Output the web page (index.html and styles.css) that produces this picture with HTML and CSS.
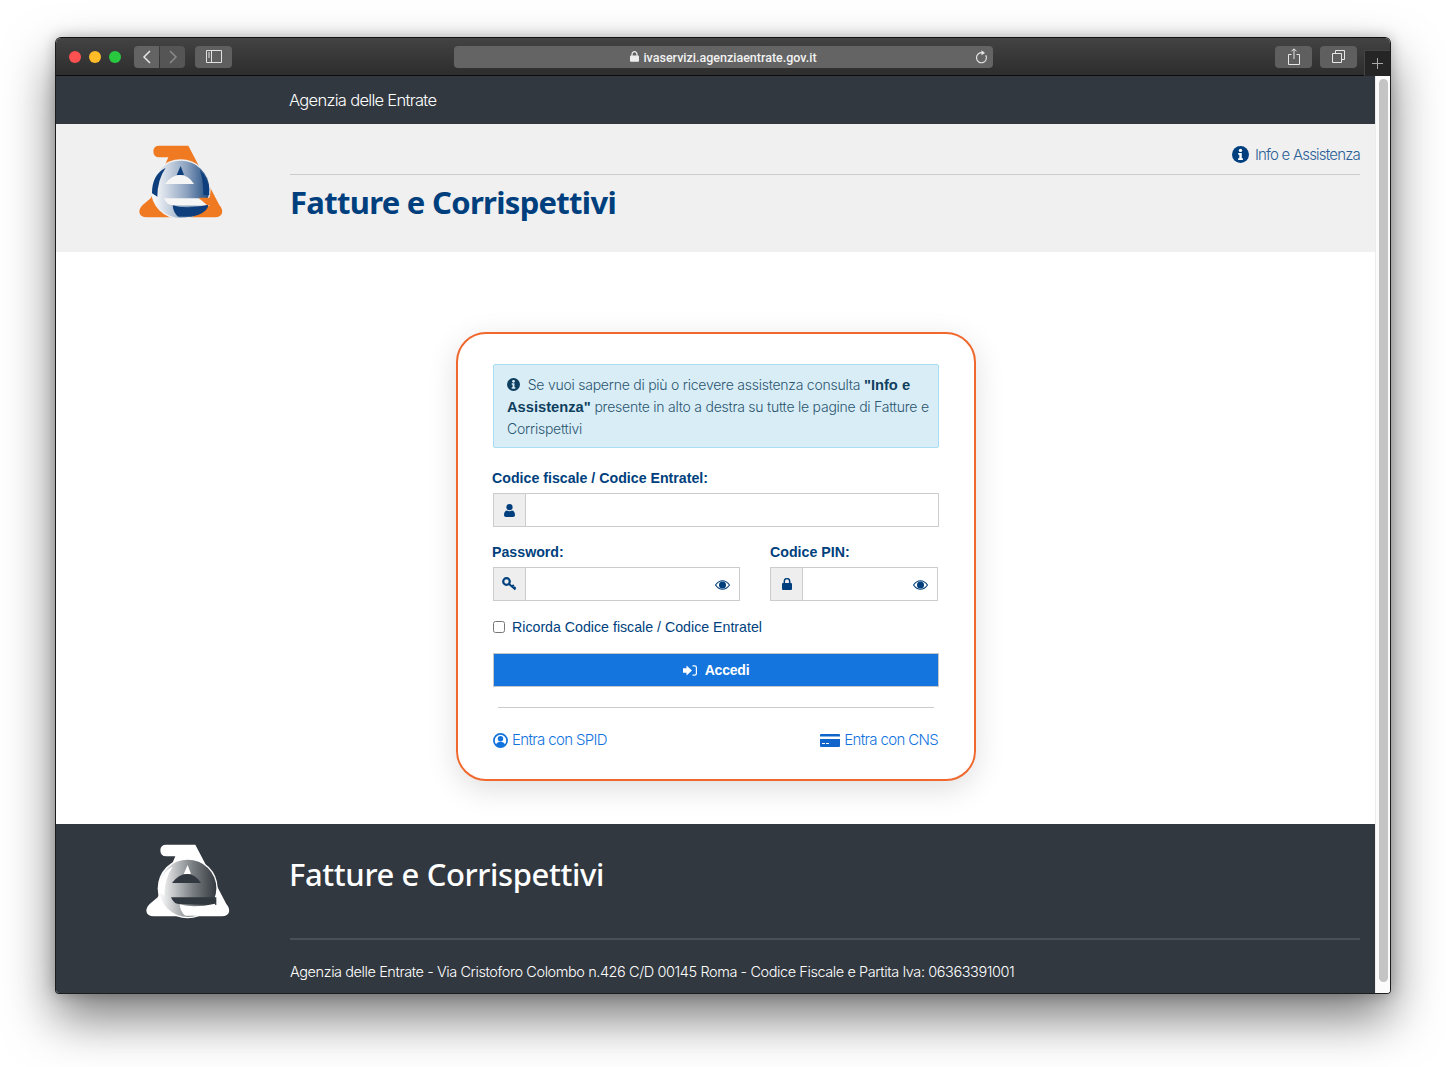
FILE: index.html
```html
<!DOCTYPE html>
<html lang="it">
<head>
<meta charset="utf-8">
<title>Fatture e Corrispettivi</title>
<link rel="stylesheet" href="styles.css">
</head>
<body>
<div class="window">
  <div class="toolbar">
    <div class="lights"><span class="light red"></span><span class="light yellow"></span><span class="light green"></span></div>
    <div class="nav">
      <span class="tbtn back"><svg width="12" height="16" viewBox="0 0 12 16"><path d="M9 2 3 8l6 6" fill="none" stroke="#e6e6e6" stroke-width="1.5"/></svg></span>
      <span class="tbtn fwd"><svg width="12" height="16" viewBox="0 0 12 16"><path d="m3 2 6 6-6 6" fill="none" stroke="#8a8a8a" stroke-width="1.5"/></svg></span>
    </div>
    <span class="tbtn wide side"><svg width="16" height="13" viewBox="0 0 16 13"><path d="M.5.5h15v12H.5zM5.500.5v12" fill="none" stroke="#e2e2e2"/><path d="M2 3h2M2 5h2M2 7h2" stroke="#e2e2e2"/></svg></span>
    <div class="url">
      <svg class="lock-mini" width="9" height="11" viewBox="0 0 9 11"><path d="M2 5V3.200a2.500 2.500 0 0 1 5 0V5" fill="none" stroke="#eee" stroke-width="1.200"/><rect y="4.600" width="9" height="6.200" rx="1" fill="#eee"/></svg>
      <span class="url-text">ivaservizi.agenziaentrate.gov.it</span>
      <svg class="reload" width="13" height="14" viewBox="0 0 13 14"><path d="M10.800 5.200a5 5 0 1 1-3-2.300" fill="none" stroke="#e6e6e6" stroke-width="1.200"/><path d="M6.500.3 10 3 6.500 5.200z" fill="#e6e6e6"/></svg>
    </div>
    <span class="tbtn wide share"><svg width="12" height="17" viewBox="0 0 12 17"><path d="M3.500 6.500H.5v10h11v-10h-3M6 11V1M3.500 3.300 6 .8l2.500 2.500" fill="none" stroke="#e6e6e6"/></svg></span>
    <span class="tbtn wide tabs"><svg width="13" height="13" viewBox="0 0 13 13"><path d="M3.500 3V.5h9v9H10M.5 3.500h9v9h-9z" fill="none" stroke="#e6e6e6"/></svg></span>
    <span class="newtab"><svg width="11" height="11" viewBox="0 0 11 11"><path d="M5.500 0v11M0 5.500h11" stroke="#aaa"/></svg></span>
  </div>

  <div class="viewport">
    <div class="page">
      <div class="topbar">Agenzia delle Entrate</div>

      <header class="header">
        <div class="logo-col">
          <svg class="logo" width="130" height="100" viewBox="0 0 390 300">
            <defs>
              <linearGradient id="g1" x1="0" x2="1" y1="0" y2="0"><stop offset="0" stop-color="#fff"/><stop offset=".6" stop-color="#8ea3c0"/><stop offset="1" stop-color="#1d4a80"/></linearGradient>
            </defs>
            <path d="M118 47H205L298 225C312 240 310 262 285 262H80C55 262 52 240 68 225L92 205 145 82H118Q100 82 100 64 100 47 118 47Z" fill="#f07a22"/>
            <circle cx="182" cy="178" r="90" fill="#f0f0f0"/>
            <circle cx="182" cy="178" r="86" fill="url(#g1)"/>
            <path d="M137 113Q95 135 96 190L112 200Q112 150 137 113Z" fill="#0e3f7c"/>
            <path d="M182 108 192 135H170Z" fill="#0e3f7c"/>
            <path d="M240 120Q270 150 268 195L250 195Q250 150 240 120Z" fill="#0e3f7c"/>
            <path d="M135 162Q155 135 180 135 205 135 222 162Z" fill="#f5f5f5"/>
            <path d="M132 205H268V228L160 226Q140 226 132 205Z" fill="#f5f5f5"/>
            <path d="M158 226Q200 238 265 224 262 250 215 260H175Q160 250 158 226Z" fill="#0e3f7c"/>
            <path d="M235 203H275L290 226 262 226Z" fill="#f07a22"/>
          </svg>
        </div>
        <div class="head-main">
          <a class="info-link" href="#"><svg class="i-info" width="17" height="17" viewBox="0 0 17 17"><circle cx="8.500" cy="8.500" r="8.500" fill="#003f7d"/><circle cx="8.500" cy="4.400" r="1.700" fill="#fff"/><path d="M6.200 7h3.600v5.200h1.100v1.800H6.100v-1.800h1.200V8.800H6.200z" fill="#fff"/></svg>Info e Assistenza</a>
          <h1 class="app-title">Fatture e Corrispettivi</h1>
        </div>
      </header>

      <main class="main">
        <form class="card">
          <div class="alert">
            <svg class="i-alert" width="13" height="13" viewBox="0 0 17 17"><circle cx="8.500" cy="8.500" r="8.500" fill="#0f3f5e"/><circle cx="8.500" cy="4.400" r="1.800" fill="#d9edf7"/><path d="M6.200 7h3.600v5.200h1.100v1.800H6.100v-1.800h1.200V8.800H6.200z" fill="#d9edf7"/></svg>
            Se vuoi saperne di più o ricevere assistenza consulta <strong>"Info e</strong> <strong>Assistenza"</strong> presente in alto a destra su tutte le pagine di Fatture e <span>Corrispettivi</span>
          </div>

          <label class="label">Codice fiscale / Codice Entratel:</label>
          <div class="field">
            <span class="addon"><svg width="11" height="13" viewBox="0 0 11 13"><circle cx="5.500" cy="3.200" r="3.100" fill="#003f7d"/><path d="M0 11c0-3 1.500-4.600 3-4.600.7.500 1.500.8 2.500.8s1.800-.3 2.500-.8c1.500 0 3 1.600 3 4.600 0 1.200-.8 2-2 2H2c-1.200 0-2-.8-2-2z" fill="#003f7d"/></svg></span>
            <input class="input" type="text">
          </div>

          <div class="pair">
            <div class="col-pass">
              <label class="label">Password:</label>
              <div class="field">
                <span class="addon"><svg width="15" height="14" viewBox="0 0 15 14"><circle cx="4.500" cy="4.500" r="3.300" fill="none" stroke="#003f7d" stroke-width="2.200"/><path d="m7 7 6.500 5.500M10 9.500l1.800-1.600M12 11.300l1.500-1.300" stroke="#003f7d" stroke-width="2" fill="none"/></svg></span>
                <input class="input" type="password">
                <svg class="eye" width="15" height="10" viewBox="0 0 15 10"><path d="M.5 5Q3.500.7 7.500.7T14.500 5Q11.500 9.300 7.500 9.300T.5 5Z" fill="none" stroke="#003f7d" stroke-width="1.100"/><circle cx="7.500" cy="5" r="3.500" fill="#003f7d"/></svg>
              </div>
            </div>
            <div class="col-pin">
              <label class="label label-pin">Codice PIN:</label>
              <div class="field">
                <span class="addon"><svg width="10" height="12" viewBox="0 0 10 12"><path d="M2.300 5.500V3.300a2.700 2.700 0 0 1 5.400 0v2.200" fill="none" stroke="#003f7d" stroke-width="1.500"/><rect y="5" width="10" height="7" rx="1" fill="#003f7d"/></svg></span>
                <input class="input" type="password">
                <svg class="eye" width="15" height="10" viewBox="0 0 15 10"><path d="M.5 5Q3.500.7 7.500.7T14.500 5Q11.500 9.300 7.500 9.300T.5 5Z" fill="none" stroke="#003f7d" stroke-width="1.100"/><circle cx="7.500" cy="5" r="3.500" fill="#003f7d"/></svg>
              </div>
            </div>
          </div>

          <label class="remember"><input class="check" type="checkbox">Ricorda Codice fiscale / Codice Entratel</label>

          <button class="submit" type="button"><svg width="14" height="11" viewBox="0 0 14 11"><path d="M0 3.300h3.500V.5L9 5.500 3.500 10.500V7.700H0z" fill="#fff"/><path d="M9.500.9h2.200q1.700 0 1.700 1.700v5.800q0 1.700-1.700 1.700H9.500" fill="none" stroke="#fff" stroke-width="1.200"/></svg>Accedi</button>

          <div class="rule"></div>

          <div class="alt">
            <a class="alt-link" href="#"><svg width="15" height="15" viewBox="0 0 15 15"><circle cx="7.500" cy="7.500" r="6.600" fill="#fff" stroke="#1273de" stroke-width="1.700"/><circle cx="7.500" cy="5.800" r="2.700" fill="#1273de"/><path d="M2.800 12c.8-2.200 2.500-3.200 4.700-3.200s3.900 1 4.700 3.200q-2 2-4.700 2t-4.700-2z" fill="#1273de"/></svg>Entra con SPID</a>
            <a class="alt-link" href="#"><svg width="20" height="13" viewBox="0 0 20 13"><path d="M1 0h18q1 0 1 1v1.500H0V1q0-1 1-1zM0 5h20v7q0 1-1 1H1q-1 0-1-1z" fill="#0f65c9"/><path d="M2 9.500h3M6 9.500h3" stroke="#fff" stroke-width="1"/></svg>Entra con CNS</a>
          </div>
        </form>
      </main>

      <footer class="footer">
        <div class="foot-logo">
          <svg class="logo" width="130" height="100" viewBox="0 0 390 300">
            <defs>
              <linearGradient id="g2" x1="0" x2="1" y1="0" y2="0"><stop offset="0" stop-color="#fff"/><stop offset=".6" stop-color="#777c80"/><stop offset="1" stop-color="#33393f"/></linearGradient>
            </defs>
            <path d="M118 47H205L298 225C312 240 310 262 285 262H80C55 262 52 240 68 225L92 205 145 82H118Q100 82 100 64 100 47 118 47Z" fill="#fff"/>
            <circle cx="182" cy="178" r="90" fill="#fff"/>
            <circle cx="182" cy="178" r="86" fill="url(#g2)"/>
            <path d="M137 113Q95 135 96 190L112 200Q112 150 137 113Z" fill="#fff"/>
            <path d="M182 108 192 135H170Z" fill="#fff"/>
            <path d="M135 162Q155 135 180 135 205 135 222 162Z" fill="#32383f"/>
            <path d="M132 205H268V228L160 226Q140 226 132 205Z" fill="#32383f"/>
            <path d="M158 226Q200 238 265 224 262 250 215 260H175Q160 250 158 226Z" fill="#fff"/>
          </svg>
        </div>
        <div class="foot-main">
          <div class="foot-title">Fatture e Corrispettivi</div>
          <div class="address">Agenzia delle Entrate - Via Cristoforo Colombo n.426 C/D 00145 Roma - Codice Fiscale e Partita Iva: 06363391001</div>
        </div>
      </footer>
    </div>
    <div class="scrollbar"><span class="thumb"></span></div>
  </div>
</div>
</body>
</html>
```

FILE: styles.css
```css
* { box-sizing: border-box; }
html, body { margin: 0; height: 1067px; overflow: hidden; background: #fff; }
body { padding: 37px 55px 0; font-family: "Inter", "Liberation Sans", sans-serif; }
a { text-decoration: none; }

.window {
  width: 1336px; height: 957px; border-radius: 6px 6px 4px 4px;
  display: flex; flex-direction: column; border: 1px solid #1c1c1c; border-top-color: #111;
  box-shadow: 0 24px 50px rgba(0,0,0,.52), 0 0 14px rgba(0,0,0,.25);
}

.toolbar {
  height: 38px; flex: none; display: flex; align-items: center; padding: 0 0 0 13px; position: relative;
  background: linear-gradient(#434343, #2d2d2d); border-bottom: 1px solid #0c0c0c;
  border-radius: 5px 5px 0 0;
}
.lights { display: flex; gap: 8px; }
.light { width: 12px; height: 12px; border-radius: 50%; }
.red { background: #fc5150; }
.yellow { background: #fdbc28; }
.green { background: #29c93f; }

.nav { display: flex; gap: 1px; margin-left: 13px; }
.tbtn { height: 22px; background: #5f5f5f; display: flex; align-items: center; justify-content: center; border-radius: 4px; }
.back { width: 25px; border-radius: 4px 0 0 4px; background: #636363; }
.fwd { width: 25px; border-radius: 0 4px 4px 0; background: #555; }
.wide { width: 37px; }
.side { margin-left: 10px; }
.url {
  width: 539px; height: 22px; margin-left: 222px; background: #646464; border-radius: 4px;
  display: flex; align-items: center; justify-content: center; position: relative; color: #f2f2f2;
  font: 500 12.500px "Roboto", sans-serif; gap: 4px;
}
.url-text { padding-top: 2px; }
.lock-mini { margin-top: -1px; }
.reload { position: absolute; right: 5px; top: 4px; }
.share { margin-left: 282px; }
.tabs { margin-left: 8px; }
.newtab {
  width: 26px; height: 26px; position: absolute; right: 0; bottom: -1px; background: #252525;
  border: 1px solid #444; border-bottom: 0; border-right: 0; display: flex; align-items: center; justify-content: center;
}

.viewport { flex: 1; display: flex; min-height: 0; border-radius: 0 0 3px 3px; overflow: hidden; }
.page { width: 1319px; flex: none; display: flex; flex-direction: column; }
.scrollbar { flex: 1; background: #fbfbfb; border-left: 1px solid #ececec; padding: 3px 3px; }
.thumb { display: block; width: 9px; height: 903px; border-radius: 5px; background: #c4c4c4; }

.topbar {
  height: 48px; flex: none; background: #32383f; color: #fff; padding-left: 233px;
  display: flex; align-items: center; font-size: 16.500px; font-weight: 300; letter-spacing: -.7px;
}

.header { height: 128px; flex: none; background: #f0f0f0; display: flex; }
.logo-col { width: 234px; flex: none; padding: 6px 0 0 64px; }
.logo { display: block; }
.head-main { flex: 1; margin-right: 15px; }
.info-link {
  height: 51px; border-bottom: 1px solid #ccc; display: flex; align-items: center; justify-content: flex-end;
  color: #2a5f97; font-size: 15px; font-weight: 300; letter-spacing: -.8px; gap: 6px; padding-top: 11px;
}
.app-title {
  margin: 7px 0 0; font: 700 31px/40px "Noto Sans", sans-serif; color: #003f7d; letter-spacing: -.7px;
}

.main { height: 572px; flex: none; background: #fff; padding: 80px 0 0 400px; }
.card {
  width: 520px; height: 449px; border: 2px solid #f0682d; border-radius: 30px; background: #fff;
  padding: 30px 35px 0; box-shadow: 0 8px 30px rgba(0,0,0,.13);
  display: flex; flex-direction: column; align-items: flex-start;
}
.alert {
  width: 446px; height: 84px; background: #d9edf7; border: 1px solid #a8def5; border-radius: 2px;
  padding: 9px 5px 0 13px; color: #2a566f; font-size: 14px; line-height: 22px; font-weight: 300; letter-spacing: -.24px;
}
.alert strong { font-family: "Liberation Sans", sans-serif; font-weight: 700; color: #0f3f5e; letter-spacing: 0; font-size: 14.700px; }
.i-alert { vertical-align: -1px; margin-right: 4px; }

.label { display: block; margin-left: -1px; color: #003f7d; font: 700 14.200px/18px "Liberation Sans", sans-serif; }
.label-pin { margin-left: 0; }
.alert + .label { margin-top: 21px; }
.field {
  height: 34px; width: 446px; margin-top: 6px; border: 1px solid #ccc; display: flex; align-items: center; background: #fff;
}
.addon { width: 32px; height: 32px; flex: none; background: #eee; border-right: 1px solid #ccc; display: flex; align-items: center; justify-content: center; }
.input { flex: 1; min-width: 0; height: 32px; border: 0; outline: 0; padding: 0 8px; background: transparent; }
.eye { flex: none; margin: 1px 9px 0 0; }

.pair { display: flex; width: 446px; margin-top: 16px; gap: 30px; }
.col-pass { width: 247px; }
.col-pin { width: 168px; }
.pair .field { width: 100%; }

.remember { display: flex; align-items: center; margin-top: 16px; height: 20px; color: #003f7d; font: 400 14.200px "Liberation Sans", sans-serif; }
.check { width: 12px; height: 12px; margin: 0 7px 0 0; }

.submit {
  width: 446px; height: 34px; margin-top: 16px; background: #1375dd; border: 1px solid #c6c6c6; color: #fff;
  font: 700 14px "Liberation Sans", sans-serif; letter-spacing: -.2px; display: flex; align-items: center; justify-content: center; gap: 8px;
}
.rule { width: 436px; height: 1px; background: #ccc; margin: 20px 0 0 5px; }
.alt { width: 445px; display: flex; justify-content: space-between; margin: 22px 0 0 0; }
.alt-link { display: flex; align-items: center; gap: 4px; color: #1273de; font-size: 15px; font-weight: 300; letter-spacing: -.65px; line-height: 20px; }

.footer { flex: 1; background: #32383f; color: #fff; min-height: 0; display: flex; }
.foot-logo { width: 234px; flex: none; padding: 5px 0 0 71px; }
.foot-main { flex: 1; margin-right: 15px; }
.foot-title { height: 116px; border-bottom: 2px solid #4a5057; font: 500 31px/40px "Noto Sans", sans-serif; padding-top: 30px; letter-spacing: -.38px; text-indent: -1px; }
.address { margin-top: 22px; font-size: 14.500px; font-weight: 300; letter-spacing: -.42px; line-height: 20px; }
```
